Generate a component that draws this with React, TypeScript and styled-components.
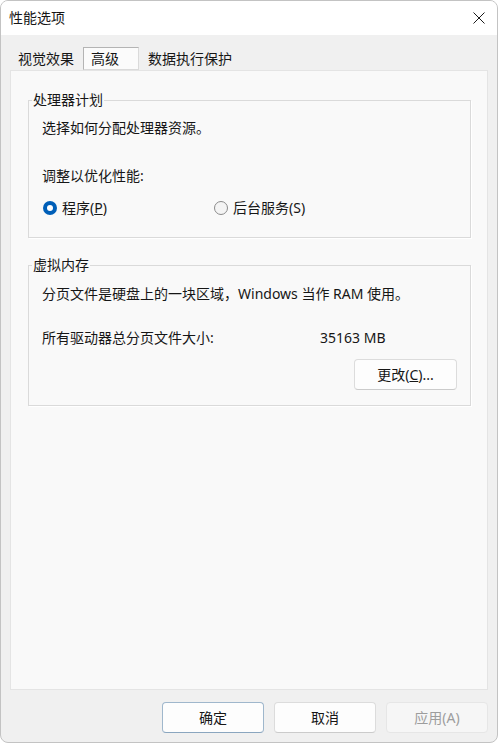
import React from 'react';
import styled, { createGlobalStyle } from 'styled-components';

const GlobalStyle = createGlobalStyle`
  html, body {
    margin: 0;
    padding: 0;
    background: #ffffff;
  }
  body {
    font-family: 'Noto Sans', 'Noto Sans CJK SC', sans-serif;
    color: #161616;
  }
  * {
    box-sizing: border-box;
  }
`;

const App = () => {
  return (
    <>
      <GlobalStyle />
      <Window>
        <TitleBar>
          <Title>性能选项</Title>
          <CloseButton aria-label="关闭">
            <svg width="12" height="12" viewBox="0 0 12 12">
              <path d="M0.5 0.5 L11.5 11.5 M11.5 0.5 L0.5 11.5" stroke="#1b1b1b" strokeWidth="1" fill="none" />
            </svg>
          </CloseButton>
        </TitleBar>
        <Body>
          <TabList>
            <Tab>视觉效果</Tab>
            <Tab $active>高级</Tab>
            <Tab>数据执行保护</Tab>
          </TabList>
          <Panel>
            <Group $pb={19}>
              <GroupTitle>处理器计划</GroupTitle>
              <Text $top={8}>选择如何分配处理器资源。</Text>
              <Text $top={28}>调整以优化性能:</Text>
              <RadioRow>
                <RadioOption>
                  <RadioMark $checked />
                  <span>
                    程序(<u>P</u>)
                  </span>
                </RadioOption>
                <RadioOption>
                  <RadioMark />
                  <span>后台服务(S)</span>
                </RadioOption>
              </RadioRow>
            </Group>
            <Group $pb={15} $mt={17}>
              <GroupTitle>虚拟内存</GroupTitle>
              <Text $top={9}>分页文件是硬盘上的一块区域，Windows 当作 RAM 使用。</Text>
              <SizeRow>
                <SizeLabel>所有驱动器总分页文件大小:</SizeLabel>
                <span>35163 MB</span>
              </SizeRow>
              <ChangeRow>
                <Button $width={103}>
                  更改(<u>C</u>)...
                </Button>
              </ChangeRow>
            </Group>
          </Panel>
          <Footer>
            <Button $primary>确定</Button>
            <Button>取消</Button>
            <Button disabled>应用(A)</Button>
          </Footer>
        </Body>
      </Window>
    </>
  );
};

const Window = styled.div`
  width: 498px;
  height: 743px;
  border: 1px solid #c3c3c3;
  border-radius: 8px;
  overflow: hidden;
  display: flex;
  flex-direction: column;
  background: #f0f0f0;
`;

const TitleBar = styled.div`
  height: 34px;
  flex: none;
  background: #ffffff;
  display: flex;
  align-items: center;
  justify-content: space-between;
  padding: 0 11px 0 8px;
`;

const Title = styled.div`
  font-size: 14px;
  line-height: 20px;
`;

const CloseButton = styled.button`
  border: none;
  background: transparent;
  padding: 0;
  width: 14px;
  height: 14px;
  display: flex;
  align-items: center;
  justify-content: center;
`;

const Body = styled.div`
  flex: 1;
  display: flex;
  flex-direction: column;
  padding: 12px 9px 0 9px;
  font-size: 14px;
  line-height: 20px;
`;

const TabList = styled.div`
  display: flex;
  align-items: stretch;
  height: 23px;
  gap: 1px;
`;

const Tab = styled.div<{ $active?: boolean }>`
  display: flex;
  align-items: center;
  padding: 0 7px;
  width: ${(p) => (p.$active ? '56px' : 'auto')};
  background: ${(p) => (p.$active ? '#fbfbfb' : 'transparent')};
  border: 1px solid ${(p) => (p.$active ? '#b4b4b4' : 'transparent')};
  border-right-color: ${(p) => (p.$active ? '#dadada' : 'transparent')};
  border-bottom-color: ${(p) => (p.$active ? '#dadada' : 'transparent')};
  white-space: nowrap;
`;

const Panel = styled.div`
  height: 620px;
  flex: none;
  background: #f9f9f9;
  border: 1px solid #e4e4e4;
  padding: 19px 16px 0 17px;
`;

const Group = styled.fieldset<{ $pb: number; $mt?: number }>`
  margin: ${(p) => p.$mt || 0}px 0 0 0;
  padding: 0 13px ${(p) => p.$pb}px 13px;
  border: 1px solid #dadada;
  box-shadow: 1px 1px 0 #ffffff;
  min-inline-size: 0;
`;

const GroupTitle = styled.legend`
  margin-left: -10px;
  padding: 0 1px;
  line-height: 20px;
`;

const Text = styled.div<{ $top: number }>`
  margin-top: ${(p) => p.$top}px;
  white-space: nowrap;
`;

const RadioRow = styled.div`
  margin-top: 12px;
  display: grid;
  grid-template-columns: 171px auto;
`;

const RadioOption = styled.label`
  display: flex;
  align-items: center;
  gap: 5px;
`;

const RadioMark = styled.span<{ $checked?: boolean }>`
  width: 14px;
  height: 14px;
  border-radius: 50%;
  flex: none;
  margin-left: 1px;
  background: ${(p) => (p.$checked ? '#005fb8' : '#f4f4f4')};
  border: ${(p) => (p.$checked ? 'none' : '1px solid #8b8b8b')};
  display: flex;
  align-items: center;
  justify-content: center;
  &::after {
    content: '';
    display: ${(p) => (p.$checked ? 'block' : 'none')};
    width: 6px;
    height: 6px;
    border-radius: 50%;
    background: #ffffff;
  }
`;

const SizeRow = styled.div`
  margin-top: 24px;
  display: flex;
`;

const SizeLabel = styled.span`
  width: 278px;
  flex: none;
`;

const ChangeRow = styled.div`
  margin-top: 11px;
  display: flex;
  justify-content: flex-end;
`;

const Button = styled.button<{ $primary?: boolean; $width?: number }>`
  width: ${(p) => p.$width || 102}px;
  height: 31px;
  font-family: inherit;
  font-size: 14px;
  line-height: 20px;
  color: #161616;
  background: #fdfdfd;
  border: 1px solid ${(p) => (p.$primary ? '#9fb7cc' : '#dcdcdc')};
  border-bottom-color: ${(p) => (p.$primary ? '#8aa6bf' : '#cbcbcb')};
  border-radius: 4px;
  padding: 0;
  &:disabled {
    background: #f6f6f6;
    color: #9d9d9d;
    border-color: #e6e6e6;
  }
`;

const Footer = styled.div`
  display: flex;
  justify-content: flex-end;
  gap: 10px;
  padding-top: 12px;
`;

export default App;
